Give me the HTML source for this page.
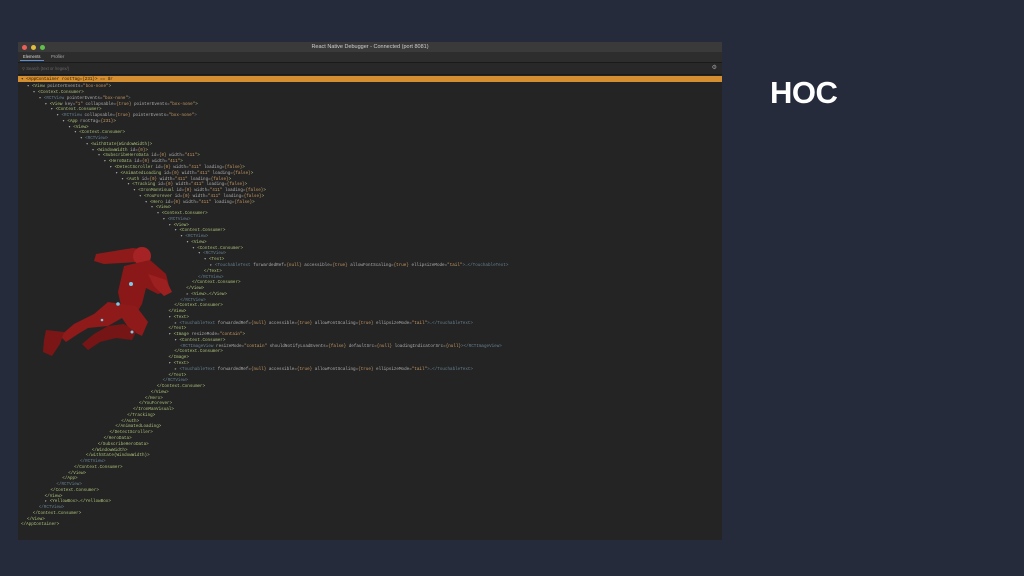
<!DOCTYPE html>
<html><head><meta charset="utf-8"><style>
body{margin:0;width:1024px;height:576px;background:#262b3c;position:relative;overflow:hidden;font-family:"Liberation Sans",sans-serif}
.win{position:absolute;left:18px;top:42px;width:704px;height:498px;background:#242424;overflow:hidden}
.tb{position:absolute;left:0;top:0;width:704px;height:10px;background:#3a3a3a;color:#cfcfcf;font-size:5.5px;text-align:center;line-height:10px}
.dot{position:absolute;top:2.5px;width:5px;height:5px;border-radius:50%}
.tabs{position:absolute;top:10px;left:0;width:704px;height:10px;background:#2d2d2d;border-bottom:1px solid #1a1a1a}
.tab{position:absolute;top:0;font-size:4.2px;color:#aaa;line-height:10px}
.search{position:absolute;top:21px;left:0;width:704px;height:11px;background:#282828;border-bottom:1px solid #1b1b1b;font-size:4.2px;color:#666;line-height:11px}
.bar{position:absolute;top:34px;left:0;width:704px;height:5.5px;background:#d48f33}
.code{position:absolute;left:0;top:36.5px;font-family:"Liberation Mono",monospace;font-size:4.25px;line-height:5.77px;white-space:pre;color:#b8b8b8}
.code div{height:5.77px}
.t{color:#a9c078}.r{color:#65808f}.v{color:#c99a63}.a{color:#adadad}
.hoc{position:absolute;left:770px;top:75px;color:#fff;font-weight:bold;font-size:31px;letter-spacing:-0.5px}
</style></head><body>
<div class="win">
<div class="tb"><span class="dot" style="left:4px;background:#ec5f57"></span><span class="dot" style="left:13px;background:#e1bd3e"></span><span class="dot" style="left:22px;background:#5fc14a"></span>React Native Debugger - Connected (port 8081)</div>
<div class="tabs"><span class="tab" style="left:5px;color:#ddd">Elements</span><span class="tab" style="left:33px">Profiler</span><div style="position:absolute;left:2px;top:8px;width:24px;height:1px;background:#5a8fd6"></div></div>
<div class="search"><span style="margin-left:4px">⚲ Search (text or /regex/)</span><span style="position:absolute;right:5px;color:#999;font-size:6px">⚙</span></div>
<div class="bar"></div>
<div class="code" id="c"></div>
</div>
<svg style="position:absolute;left:38px;top:244px" width="140" height="115" viewBox="0 0 140 115">
<g fill="#8e1a1a">
<path d="M58 10 L95 4 L108 6 L112 14 L100 18 L66 20 L56 17Z"/>
<circle cx="104" cy="12" r="9" fill="#a52325"/>
<path d="M86 22 L112 16 L128 30 L132 46 L120 50 L108 44 L104 60 L98 70 L84 66 L80 48Z" fill="#8a1818"/>
<path d="M70 58 L98 62 L110 78 L104 92 L92 86 L84 74 L70 82 L50 84 L40 90 L28 98 L22 92 L36 80 L56 70Z"/>
<path d="M70 82 L86 80 L98 88 L94 96 L78 94 L62 98 L50 106 L44 100 L56 90Z" fill="#761515"/>
<path d="M8 86 L26 88 L22 100 L14 112 L5 108 L6 96Z" fill="#7a1616"/>
<path d="M110 30 L128 36 L134 48 L126 52 L116 42Z" fill="#9c2020"/>
</g>
<g fill="#7fc8e6"><circle cx="93" cy="40" r="2"/><circle cx="80" cy="60" r="1.8"/><circle cx="94" cy="88" r="1.5"/><circle cx="64" cy="76" r="1.3"/></g>
</svg>
<div class="hoc">HOC</div>
<script>
var L=[
[0,'<span style="color:#2a1a00">▾ &lt;AppContainer rootTag={231}&gt; == $r</span>'],
[1,'▾ <t>&lt;View</t> <a>pointerEvents</a>=<v>"box-none"</v><t>&gt;</t>'],
[2,'▾ <t>&lt;Context.Consumer&gt;</t>'],
[3,'▾ <r>&lt;RCTView</r> <a>pointerEvents</a>=<v>"box-none"</v><r>&gt;</r>'],
[4,'▾ <t>&lt;View</t> <a>key</a>=<v>"1"</v> <a>collapsable</a>=<v>{true}</v> <a>pointerEvents</a>=<v>"box-none"</v><t>&gt;</t>'],
[5,'▾ <t>&lt;Context.Consumer&gt;</t>'],
[6,'▾ <r>&lt;RCTView</r> <a>collapsable</a>=<v>{true}</v> <a>pointerEvents</a>=<v>"box-none"</v><r>&gt;</r>'],
[7,'▾ <t>&lt;App</t> <a>rootTag</a>=<v>{231}</v><t>&gt;</t>'],
[8,'▾ <t>&lt;View&gt;</t>'],
[9,'▾ <t>&lt;Context.Consumer&gt;</t>'],
[10,'▾ <r>&lt;RCTView&gt;</r>'],
[11,'▾ <t>&lt;withState(WindowWidth)&gt;</t>'],
[12,'▾ <t>&lt;WindowWidth</t> <a>id</a>=<v>{0}</v><t>&gt;</t>'],
[13,'▾ <t>&lt;SubscribeHeroData</t> <a>id</a>=<v>{0}</v> <a>width</a>=<v>"411"</v><t>&gt;</t>'],
[14,'▾ <t>&lt;HeroData</t> <a>id</a>=<v>{0}</v> <a>width</a>=<v>"411"</v><t>&gt;</t>'],
[15,'▾ <t>&lt;DetectScroller</t> <a>id</a>=<v>{0}</v> <a>width</a>=<v>"411"</v> <a>loading</a>=<v>{false}</v><t>&gt;</t>'],
[16,'▾ <t>&lt;AnimatedLoading</t> <a>id</a>=<v>{0}</v> <a>width</a>=<v>"411"</v> <a>loading</a>=<v>{false}</v><t>&gt;</t>'],
[17,'▾ <t>&lt;Auth</t> <a>id</a>=<v>{0}</v> <a>width</a>=<v>"411"</v> <a>loading</a>=<v>{false}</v><t>&gt;</t>'],
[18,'▾ <t>&lt;Tracking</t> <a>id</a>=<v>{0}</v> <a>width</a>=<v>"411"</v> <a>loading</a>=<v>{false}</v><t>&gt;</t>'],
[19,'▾ <t>&lt;IronManVisual</t> <a>id</a>=<v>{0}</v> <a>width</a>=<v>"411"</v> <a>loading</a>=<v>{false}</v><t>&gt;</t>'],
[20,'▾ <t>&lt;YouForever</t> <a>id</a>=<v>{0}</v> <a>width</a>=<v>"411"</v> <a>loading</a>=<v>{false}</v><t>&gt;</t>'],
[21,'▾ <t>&lt;Hero</t> <a>id</a>=<v>{0}</v> <a>width</a>=<v>"411"</v> <a>loading</a>=<v>{false}</v><t>&gt;</t>'],
[22,'▾ <t>&lt;View&gt;</t>'],
[23,'▾ <t>&lt;Context.Consumer&gt;</t>'],
[24,'▾ <r>&lt;RCTView&gt;</r>'],
[25,'▾ <t>&lt;View&gt;</t>'],
[26,'▾ <t>&lt;Context.Consumer&gt;</t>'],
[27,'▾ <r>&lt;RCTView&gt;</r>'],
[28,'▾ <t>&lt;View&gt;</t>'],
[29,'▾ <t>&lt;Context.Consumer&gt;</t>'],
[30,'▾ <r>&lt;RCTView&gt;</r>'],
[31,'▾ <t>&lt;Text&gt;</t>'],
[32,'▸ <r>&lt;TouchableText</r> <a>forwardedRef</a>=<v>{null}</v> <a>accessible</a>=<v>{true}</v> <a>allowFontScaling</a>=<v>{true}</v> <a>ellipsizeMode</a>=<v>"tail"</v><r>&gt;…&lt;/TouchableText&gt;</r>'],
[31,'<t>&lt;/Text&gt;</t>'],
[30,'<r>&lt;/RCTView&gt;</r>'],
[29,'<t>&lt;/Context.Consumer&gt;</t>'],
[28,'<t>&lt;/View&gt;</t>'],
[28,'▸ <t>&lt;View&gt;…&lt;/View&gt;</t>'],
[27,'<r>&lt;/RCTView&gt;</r>'],
[26,'<t>&lt;/Context.Consumer&gt;</t>'],
[25,'<t>&lt;/View&gt;</t>'],
[25,'▾ <t>&lt;Text&gt;</t>'],
[26,'▸ <r>&lt;TouchableText</r> <a>forwardedRef</a>=<v>{null}</v> <a>accessible</a>=<v>{true}</v> <a>allowFontScaling</a>=<v>{true}</v> <a>ellipsizeMode</a>=<v>"tail"</v><r>&gt;…&lt;/TouchableText&gt;</r>'],
[25,'<t>&lt;/Text&gt;</t>'],
[25,'▾ <t>&lt;Image</t> <a>resizeMode</a>=<v>"contain"</v><t>&gt;</t>'],
[26,'▾ <t>&lt;Context.Consumer&gt;</t>'],
[27,'<r>&lt;RCTImageView</r> <a>resizeMode</a>=<v>"contain"</v> <a>shouldNotifyLoadEvents</a>=<v>{false}</v> <a>defaultSrc</a>=<v>{null}</v> <a>loadingIndicatorSrc</a>=<v>{null}</v><r>&gt;&lt;/RCTImageView&gt;</r>'],
[26,'<t>&lt;/Context.Consumer&gt;</t>'],
[25,'<t>&lt;/Image&gt;</t>'],
[25,'▾ <t>&lt;Text&gt;</t>'],
[26,'▸ <r>&lt;TouchableText</r> <a>forwardedRef</a>=<v>{null}</v> <a>accessible</a>=<v>{true}</v> <a>allowFontScaling</a>=<v>{true}</v> <a>ellipsizeMode</a>=<v>"tail"</v><r>&gt;…&lt;/TouchableText&gt;</r>'],
[25,'<t>&lt;/Text&gt;</t>'],
[24,'<r>&lt;/RCTView&gt;</r>'],
[23,'<t>&lt;/Context.Consumer&gt;</t>'],
[22,'<t>&lt;/View&gt;</t>'],
[21,'<t>&lt;/Hero&gt;</t>'],
[20,'<t>&lt;/YouForever&gt;</t>'],
[19,'<t>&lt;/IronManVisual&gt;</t>'],
[18,'<t>&lt;/Tracking&gt;</t>'],
[17,'<t>&lt;/Auth&gt;</t>'],
[16,'<t>&lt;/AnimatedLoading&gt;</t>'],
[15,'<t>&lt;/DetectScroller&gt;</t>'],
[14,'<t>&lt;/HeroData&gt;</t>'],
[13,'<t>&lt;/SubscribeHeroData&gt;</t>'],
[12,'<t>&lt;/WindowWidth&gt;</t>'],
[11,'<t>&lt;/withState(WindowWidth)&gt;</t>'],
[10,'<r>&lt;/RCTView&gt;</r>'],
[9,'<t>&lt;/Context.Consumer&gt;</t>'],
[8,'<t>&lt;/View&gt;</t>'],
[7,'<t>&lt;/App&gt;</t>'],
[6,'<r>&lt;/RCTView&gt;</r>'],
[5,'<t>&lt;/Context.Consumer&gt;</t>'],
[4,'<t>&lt;/View&gt;</t>'],
[4,'▸ <t>&lt;YellowBox&gt;…&lt;/YellowBox&gt;</t>'],
[3,'<r>&lt;/RCTView&gt;</r>'],
[2,'<t>&lt;/Context.Consumer&gt;</t>'],
[1,'<t>&lt;/View&gt;</t>'],
[0,'<t>&lt;/AppContainer&gt;</t>']];
var h='';
L.forEach(function(l){var s=l[1].replace(/<(\/?)([tarv])>/g,function(m,c,k){return c?'</span>':'<span class="'+k+'">';});
h+='<div style="padding-left:'+(3+l[0]*5.9)+'px">'+s+'</div>';});
h=h.replace('<div style="padding-left:3px"><span style="color:#2a1a00">','<div style="padding-left:3px;margin-top:-2px;margin-bottom:2px"><span style="color:#2a1a00">');
document.getElementById('c').innerHTML=h;
</script>
</body></html>
